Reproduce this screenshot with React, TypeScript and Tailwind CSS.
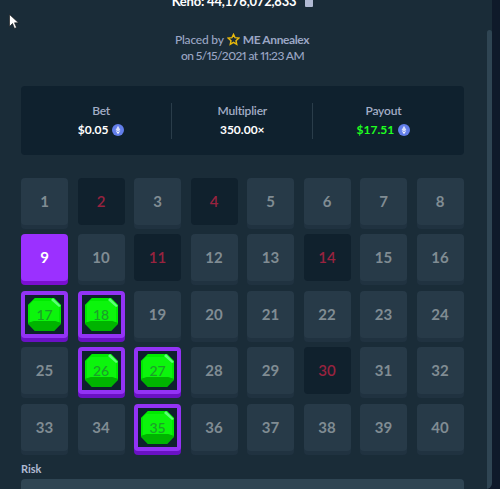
import React from "react";

const lost = [2, 4, 11, 14, 30];
const hits = [17, 18, 26, 27, 35];

const CoinIcon = () => (
  <svg width="12" height="12" viewBox="0 0 12 12" className="shrink-0">
    <circle cx="6" cy="6" r="6" fill="#627eea" />
    <path d="M6 1.8 8.4 6 6 7.4 3.6 6z" fill="#fff" fillOpacity="0.75" />
    <path d="M6 8 8.4 6.7 6 10.2 3.6 6.7z" fill="#fff" fillOpacity="0.9" />
  </svg>
);

const Gem = ({ n }: { n: number }) => (
  <div className="relative h-[33px] w-[33px]">
    <svg viewBox="0 0 33 33" className="h-full w-full">
      <path d="M7 0h19l7 7v19l-7 7H7l-7-7V7z" fill="#00c400" />
      <path d="M7 0h19l7 7v18l-6-2H6l-6 2V7z" fill="#00ea00" />
      <path d="M5 3h23l3 3v18l-5-1H7l-5 1V6z" fill="#0cf50c" />
      <path d="M0 25l6-2h21l6 2-7 8H7z" fill="#00b400" />
      <path d="M25 0l8 8-2 1-8-7z" fill="#5cff78" />
    </svg>
    <span className="absolute inset-0 flex items-center justify-center text-[14px] font-medium text-[#1c9f2a]">
      {n}
    </span>
  </div>
);

const Cell = ({ n }: { n: number }) => {
  if (hits.includes(n)) {
    return (
      <div className="flex h-[47px] items-center justify-center rounded-[4px] border-4 border-[#9333f5] bg-[#0f212e] shadow-[0_4px_0_#6a11c4]">
        <Gem n={n} />
      </div>
    );
  }
  if (n === 9) {
    return (
      <div className="flex h-[47px] items-center justify-center rounded-[4px] bg-[#9b30ff] text-[15px] font-bold text-white shadow-[0_4px_0_#7a0fd0]">
        {n}
      </div>
    );
  }
  if (lost.includes(n)) {
    return (
      <div className="flex h-[47px] items-center justify-center rounded-[4px] bg-[#10212d] text-[15px] font-semibold text-[#98233f]">
        {n}
      </div>
    );
  }
  return (
    <div className="flex h-[47px] items-center justify-center rounded-[4px] bg-[#273a48] text-[15px] font-bold text-[#808c93] shadow-[0_4px_0_#203240]">
      {n}
    </div>
  );
};

const Stat = ({ label, children, last }: { label: string; children: React.ReactNode; last?: boolean }) => (
  <div className={`flex h-9 flex-1 flex-col items-center justify-center gap-[3px] ${last ? "" : "border-r border-[#2a3d4a]"}`}>
    <span className="text-[12px] font-semibold leading-[16px] tracking-[-0.2px] text-[#a3adc6]">{label}</span>
    {children}
  </div>
);

export default function App() {
  return (
    <div className="h-[489px] w-[500px] overflow-hidden bg-[#0f1a2a] font-['Lato',sans-serif]">
      <div className="relative h-[489px] w-[492px] overflow-hidden rounded-br-md bg-[#1a2c38]">
        {/* mouse cursor from the capture */}
        <svg className="absolute left-[9px] top-[14px]" width="10" height="15" viewBox="0 0 10 15">
          <path d="M0.5 0.5v12l3-3 2 5 2-1-2-4.7h4z" fill="#fff" stroke="#111" strokeWidth="0.6" />
        </svg>
        {/* scrollbar */}
        <div className="absolute bottom-0 right-0 top-[30px] w-[5px] rounded-t bg-[#2f4553]" />

        <div className="-mt-[7px] flex items-center justify-center gap-[9px] pr-[7px] text-[13px] font-bold leading-[16px] tracking-[-0.2px] text-white">
          <span>Keno: 44,176,072,833</span>
          <div className="mt-[-2px] h-[14px] w-[8px] rounded-[1px] bg-[#b1bad3]" />
        </div>

        <div className="mt-[22px] flex flex-col items-center text-[12px] font-medium leading-[17px] text-[#9aa6c4]">
          <div className="flex items-center gap-[3px] pr-[8px]">
            <span className="tracking-[-0.2px]">Placed by</span>
            <svg width="13" height="13" viewBox="0 0 24 24" fill="none" stroke="#e8b90c" strokeWidth="2.6">
              <path d="M12 2.5l2.9 6.2 6.7.8-5 4.6 1.4 6.7L12 17.4 6 20.8l1.4-6.7-5-4.6 6.7-.8z" />
            </svg>
            <span className="font-bold tracking-[-0.4px]">ME Annealex</span>
          </div>
          <span className="-mt-px pr-[7px] tracking-[-0.55px] [font-variant-numeric:proportional-nums]">on 5/15/2021 at 11:23 AM</span>
        </div>

        <div className="ml-[21px] mt-[22px] flex h-[69px] w-[442.5px] items-center rounded-[4px] bg-[#0f212e] px-[10px]">
          <Stat label="Bet">
            <div className="flex items-center gap-1 text-[12px] font-bold leading-[16px] text-white">
              $0.05 <CoinIcon />
            </div>
          </Stat>
          <Stat label="Multiplier">
            <div className="text-[12px] font-bold leading-[16px] text-white">350.00×</div>
          </Stat>
          <Stat label="Payout" last>
            <div className="flex items-center gap-1 text-[12px] font-bold leading-[16px] text-[#1fff20]">
              $17.51 <CoinIcon />
            </div>
          </Stat>
        </div>

        <div className="ml-[21px] mt-[22.5px] grid w-[442.5px] grid-cols-8 gap-x-[9.5px] gap-y-[9.5px]">
          {Array.from({ length: 40 }, (_, i) => (
            <Cell key={i} n={i + 1} />
          ))}
        </div>

        <div className="ml-[21px] mt-[11.5px] text-[11px] font-bold leading-[14px] text-[#b1bad3]">Risk</div>
        <div className="ml-[21px] mt-[3px] h-10 w-[442.5px] rounded-t-[4px] bg-[#2f4553]" />
      </div>
    </div>
  );
}
